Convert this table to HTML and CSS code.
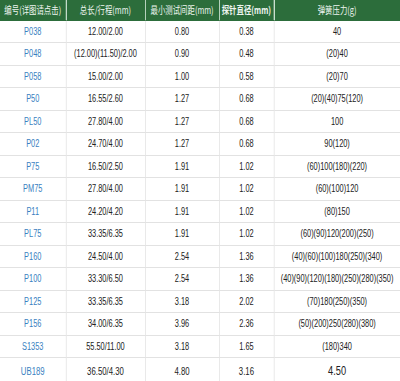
FILE: index.html
```html
<!DOCTYPE html>
<html lang="zh">
<head>
  <meta charset="UTF-8">
  <meta name="viewport" content="width=device-width, initial-scale=1.0">
  <title>探针规格</title>
  <link rel="stylesheet" href="styles.css">
</head>
<body>
  <table class="spec">
    <colgroup>
      <col class="c1"><col class="c2"><col class="c3"><col class="c4"><col class="c5">
    </colgroup>
    <thead>
      <tr>
        <th>编号(详图请点击)</th>
        <th>总长/行程(mm)</th>
        <th>最小测试间距(mm)</th>
        <th class="strong">探针直径(mm)</th>
        <th>弹簧压力(g)</th>
      </tr>
    </thead>
    <tbody>
      <tr><td class="code">P038</td><td>12.00/2.00</td><td>0.80</td><td>0.38</td><td>40</td></tr>
      <tr><td class="code">P048</td><td>(12.00)(11.50)/2.00</td><td>0.90</td><td>0.48</td><td>(20)40</td></tr>
      <tr><td class="code">P058</td><td>15.00/2.00</td><td>1.00</td><td>0.58</td><td>(20)70</td></tr>
      <tr><td class="code">P50</td><td>16.55/2.60</td><td>1.27</td><td>0.68</td><td>(20)(40)75(120)</td></tr>
      <tr><td class="code">PL50</td><td>27.80/4.00</td><td>1.27</td><td>0.68</td><td>100</td></tr>
      <tr><td class="code">P02</td><td>24.70/4.00</td><td>1.27</td><td>0.68</td><td>90(120)</td></tr>
      <tr><td class="code">P75</td><td>16.50/2.50</td><td>1.91</td><td>1.02</td><td>(60)100(180)(220)</td></tr>
      <tr><td class="code">PM75</td><td>27.80/4.00</td><td>1.91</td><td>1.02</td><td>(60)(100)120</td></tr>
      <tr><td class="code">P11</td><td>24.20/4.20</td><td>1.91</td><td>1.02</td><td>(80)150</td></tr>
      <tr><td class="code">PL75</td><td>33.35/6.35</td><td>1.91</td><td>1.02</td><td>(60)(90)120(200)(250)</td></tr>
      <tr><td class="code">P160</td><td>24.50/4.00</td><td>2.54</td><td>1.36</td><td>(40)(60)(100)180(250)(340)</td></tr>
      <tr><td class="code">P100</td><td>33.30/6.50</td><td>2.54</td><td>1.36</td><td>(40)(90)(120)(180)(250)(280)(350)</td></tr>
      <tr><td class="code">P125</td><td>33.35/6.35</td><td>3.18</td><td>2.02</td><td>(70)180(250)(350)</td></tr>
      <tr><td class="code">P156</td><td>34.00/6.35</td><td>3.96</td><td>2.36</td><td>(50)(200)250(280)(380)</td></tr>
      <tr><td class="code">S1353</td><td>55.50/11.00</td><td>3.18</td><td>1.65</td><td>(180)340</td></tr>
      <tr class="last"><td class="code">UB189</td><td>36.50/4.30</td><td>4.80</td><td>3.16</td><td class="big">4.50</td></tr>
    </tbody>
  </table>
</body>
</html>
```

FILE: styles.css
```css
* {
  margin: 0;
  padding: 0;
  box-sizing: border-box;
}

html, body {
  width: 400px;
  overflow: hidden;
}

body {
  font-family: "Liberation Sans", Arial, "Noto Sans CJK SC", sans-serif;
  background: #fff;
  color: #222;
}

/* the source table uses a narrow face, so squeeze the whole table */
.spec {
  width: 540.5px;
  border-collapse: collapse;
  table-layout: fixed;
  transform: scaleX(0.74);
  transform-origin: 0 0;
}

.c1 { width: 89px; }
.c2 { width: 107px; }
.c3 { width: 100px; }
.c4 { width: 74px; }
.c5 { width: 170.5px; }

.spec th {
  height: 20px;
  background: #2c6d3b;
  color: #eef5f0;
  font-family: "Noto Sans CJK SC", sans-serif;
  font-size: 10px;
  font-weight: normal;
  white-space: nowrap;
  border-left: 1px solid #9cc2a5;
  border-bottom: 1px solid #2c6d3b;
  overflow: hidden;
}

.spec th:first-child {
  border-left: none;
}

.spec th.strong {
  font-weight: bold;
}

.spec td {
  height: 22.5px;
  text-align: center;
  font-size: 10px;
  white-space: nowrap;
  border: 1px solid #e2e2e2;
  border-top: none;
}

.spec td:first-child {
  border-left: none;
}

.spec td:last-child {
  border-right: none;
}

.spec td.code {
  color: #3a7fc1;
}

.spec .last td {
  height: 26px;
  font-size: 10.5px;
}

.spec td.big {
  font-size: 12.5px;
}
```
